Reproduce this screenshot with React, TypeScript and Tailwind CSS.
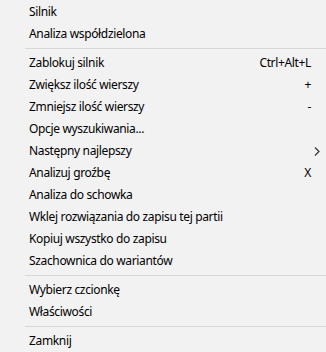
type Item =
  | { sep: true }
  | { sep?: false; label: string; shortcut?: string; submenu?: boolean };

const items: Item[] = [
  { label: "Silnik" },
  { label: "Analiza współdzielona" },
  { sep: true },
  { label: "Zablokuj silnik", shortcut: "Ctrl+Alt+L" },
  { label: "Zwiększ ilość wierszy", shortcut: "+" },
  { label: "Zmniejsz ilość wierszy", shortcut: "-" },
  { label: "Opcje wyszukiwania..." },
  { label: "Następny najlepszy", submenu: true },
  { label: "Analizuj groźbę", shortcut: "X" },
  { label: "Analiza do schowka" },
  { label: "Wklej rozwiązania do zapisu tej partii" },
  { label: "Kopiuj wszystko do zapisu" },
  { label: "Szachownica do wariantów" },
  { sep: true },
  { label: "Wybierz czcionkę" },
  { label: "Właściwości" },
  { sep: true },
  { label: "Zamknij" },
];

export default function App() {
  return (
    <div className="flex h-[352px] w-[326px] flex-col bg-[#f2f2f2] pt-px font-['Segoe_UI','Noto_Sans',sans-serif] text-[12px] tracking-[-0.35px] text-black">
      {items.map((item, i) =>
        item.sep ? (
          <div key={i} className="flex h-[7px] items-center pl-[25px]">
            <div className="h-px w-full bg-[#d7d7d7]" />
          </div>
        ) : (
          <div key={i} className="flex h-[22px] shrink-0 items-center pl-[29px] pr-[15px]">
            <span className="flex-1 whitespace-nowrap">{item.label}</span>
            {item.shortcut && (
              <span className="whitespace-nowrap">{item.shortcut}</span>
            )}
            {item.submenu && (
              <svg
                width="6"
                height="9"
                viewBox="0 0 6 9"
                className="mr-[-9px]"
                fill="none"
                stroke="#333"
                strokeWidth="1.2"
              >
                <path d="M1 0.5 L5 4.5 L1 8.5" />
              </svg>
            )}
          </div>
        )
      )}
    </div>
  );
}
